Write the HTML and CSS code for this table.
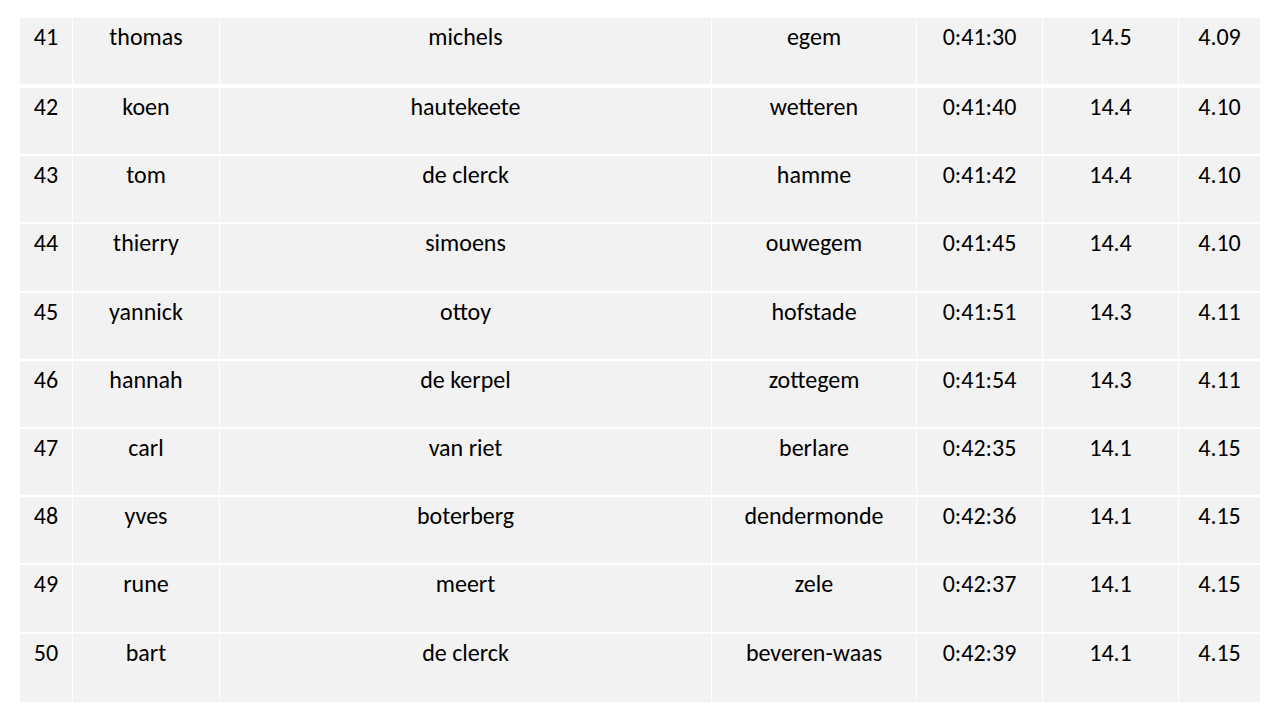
FILE: index.html
```html
<!DOCTYPE html>
<html lang="nl">
<head>
<meta charset="utf-8">
<title>Uitslag</title>
<link rel="stylesheet" href="styles.css">
</head>
<body>
<div class="page">
<table class="results">
<colgroup>
<col class="c-pos"><col class="c-first"><col class="c-last"><col class="c-city"><col class="c-time"><col class="c-speed"><col class="c-pace">
</colgroup>
<tbody>
<tr class="first"><td>41</td><td>thomas</td><td>michels</td><td>egem</td><td>0:41:30</td><td>14.5</td><td>4.09</td></tr>
<tr><td>42</td><td>koen</td><td>hautekeete</td><td>wetteren</td><td>0:41:40</td><td>14.4</td><td>4.10</td></tr>
<tr><td>43</td><td>tom</td><td>de clerck</td><td>hamme</td><td>0:41:42</td><td>14.4</td><td>4.10</td></tr>
<tr><td>44</td><td>thierry</td><td>simoens</td><td>ouwegem</td><td>0:41:45</td><td>14.4</td><td>4.10</td></tr>
<tr><td>45</td><td>yannick</td><td>ottoy</td><td>hofstade</td><td>0:41:51</td><td>14.3</td><td>4.11</td></tr>
<tr><td>46</td><td>hannah</td><td>de kerpel</td><td>zottegem</td><td>0:41:54</td><td>14.3</td><td>4.11</td></tr>
<tr><td>47</td><td>carl</td><td>van riet</td><td>berlare</td><td>0:42:35</td><td>14.1</td><td>4.15</td></tr>
<tr><td>48</td><td>yves</td><td>boterberg</td><td>dendermonde</td><td>0:42:36</td><td>14.1</td><td>4.15</td></tr>
<tr><td>49</td><td>rune</td><td>meert</td><td>zele</td><td>0:42:37</td><td>14.1</td><td>4.15</td></tr>
<tr class="last"><td>50</td><td>bart</td><td>de clerck</td><td>beveren-waas</td><td>0:42:39</td><td>14.1</td><td>4.15</td></tr>
</tbody>
</table>
</div>
</body>
</html>
```

FILE: styles.css
```css
html, body {
  margin: 0;
  padding: 0;
  background: #ffffff;
}

.page {
  width: 1280px;
  height: 720px;
  padding: 18px 20px 0 20px;
  box-sizing: border-box;
}

.results {
  width: 1240px;
  table-layout: fixed;
  border-collapse: separate;
  border-spacing: 0;
  font-family: Carlito, "Liberation Sans", sans-serif;
  font-size: 24px;
  line-height: 29px;
  color: #000000;
}

.c-pos { width: 53px; }
.c-first { width: 147px; }
.c-last { width: 492px; }
.c-city { width: 205px; }
.c-time { width: 126px; }
.c-speed { width: 136px; }
.c-pace { width: 81px; }

.results td {
  box-sizing: border-box;
  height: 68.2px;
  padding: 4px 0 0 0;
  vertical-align: top;
  text-align: center;
  background: #f2f2f2;
  border-right: 1px solid #ffffff;
  border-bottom: 2px solid #ffffff;
  white-space: nowrap;
}

.results td:last-child {
  border-right: none;
}

.results tr.first td {
  height: 70px;
  border-bottom: 4.5px solid #ffffff;
}

.results tr.last td {
  border-bottom: none;
}
```
